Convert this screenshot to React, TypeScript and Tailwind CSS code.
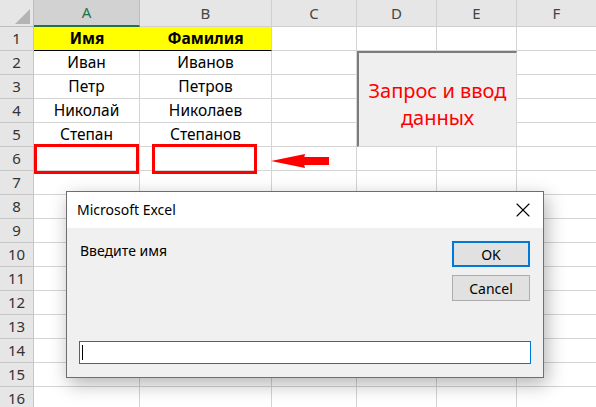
import { X } from 'lucide-react'

const cols = ['A', 'B', 'C', 'D', 'E', 'F']

const data: Record<number, [string, string]> = {
  2: ['Иван', 'Иванов'],
  3: ['Петр', 'Петров'],
  4: ['Николай', 'Николаев'],
  5: ['Степан', 'Степанов'],
}

const font = { fontFamily: '"Noto Sans", "Liberation Sans", sans-serif' }

function Sheet() {
  const rows = Array.from({ length: 16 }, (_, i) => i + 1)

  return (
    <div className="grid grid-cols-[34px_106px_132px_85px_80px_80px_80px] grid-rows-[27px_repeat(16,24px)] text-[15.5px] text-black">
      {/* corner */}
      <div className="relative bg-[#e6e6e6] border-r border-b border-[#bdbdbd]">
        <div className="absolute right-[3px] bottom-[2px] w-0 h-0 border-l-[15px] border-l-transparent border-b-[15px] border-b-[#b4b4b4]" />
      </div>
      {cols.map((c) =>
        c === 'A' ? (
          <div key={c} className="flex items-center justify-center bg-[#d2d2d2] border-r border-[#bdbdbd] border-b-2 border-b-[#217346] text-[#217346] text-[15px]">
            {c}
          </div>
        ) : (
          <div key={c} className="flex items-center justify-center bg-[#e6e6e6] border-r border-b border-[#d0d0d0] text-[#444] text-[15px]">
            {c}
          </div>
        )
      )}

      {rows.map((r) => (
        <Row key={r} r={r} />
      ))}

      {/* merged D2:E5 */}
      <div className="col-start-5 col-span-2 row-start-3 row-span-4 flex items-center justify-center pt-2 bg-[#efefef] border-t-2 border-l-2 border-[#7c7c7c] border-r border-r-[#d4d4d4] border-b border-b-[#d4d4d4] text-[20px] leading-[27px] text-[#ff0000] text-center">
        <span>
          Запрос и ввод
          <br />
          данных
        </span>
      </div>
    </div>
  )
}

function Row({ r }: { r: number }) {
  const header = (
    <div className="flex items-center justify-center bg-[#e6e6e6] border-r border-b border-[#c6c6c6] text-[#333] text-[15px]">
      {r}
    </div>
  )

  if (r === 1) {
    return (
      <>
        {header}
        <div className="flex items-center justify-center bg-[#ffff00] border-b border-black font-bold">Имя</div>
        <div className="flex items-center justify-center bg-[#ffff00] border-r border-r-[#d4d4d4] border-b border-black font-bold">Фамилия</div>
        {['C', 'D', 'E', 'F'].map((c) => (
          <div key={c} className="border-r border-b border-[#d4d4d4]" />
        ))}
      </>
    )
  }

  const vals = data[r]
  const skip = r >= 2 && r <= 5
  return (
    <>
      {header}
      <div className="flex items-center justify-center border-r border-b border-[#d4d4d4]">{vals?.[0]}</div>
      <div className="flex items-center justify-center border-r border-b border-[#d4d4d4]">{vals?.[1]}</div>
      <div className="border-r border-b border-[#d4d4d4]" />
      {!skip && <div className="border-r border-b border-[#d4d4d4]" />}
      {!skip && <div className="border-r border-b border-[#d4d4d4]" />}
      <div className="border-r border-b border-[#d4d4d4]" />
    </>
  )
}

function Dialog() {
  return (
    <div className="absolute left-[66px] top-[191px] w-[478px] h-[187px] flex flex-col bg-[#f0f0f0] border border-[#6e6e6e] shadow-[3px_6px_18px_rgba(0,0,0,0.3)] text-[14px] text-black">
      <div className="h-[36px] flex items-center justify-between bg-white pl-[10px] pr-[8px]">
        <span className="-mt-[1px]">Microsoft Excel</span>
        <X size={24} strokeWidth={1.1} className="text-black" />
      </div>
      <div className="flex-1 flex flex-col justify-between px-[12px] pt-[13px] pb-[13px]">
        <div className="flex justify-between">
          <span className="pl-[1px] -mt-[1px]">Введите имя</span>
          <div className="w-[78px] flex flex-col gap-[8px] mr-[1px]">
            <button className="h-[26px] bg-[#e1e1e1] border-2 border-[#0078d7] text-[14px]">OK</button>
            <button className="h-[26px] bg-[#e1e1e1] border border-[#adadad] text-[14px]">Cancel</button>
          </div>
        </div>
        <div className="h-[23px] bg-white border border-[#0078d7] flex items-center pl-[2px]">
          <div className="w-px h-[15px] bg-black" />
        </div>
      </div>
    </div>
  )
}

export default function App() {
  return (
    <div className="relative w-[596px] h-[407px] overflow-hidden bg-white" style={font}>
      <Sheet />

      {/* red marks drawn over the sheet */}
      <div className="absolute left-[34px] top-[144px] w-[105px] h-[30px] border-[3px] border-[#ff0000]" />
      <div className="absolute left-[152px] top-[144px] w-[105px] h-[30px] border-[3px] border-[#ff0000]" />
      <svg className="absolute left-[270px] top-[152px]" width="60" height="18" viewBox="0 0 60 18">
        <path d="M1 9 L35 2 Q33 9 35 16 Z" fill="#ff0000" />
        <rect x="33" y="5" width="26" height="8" fill="#ff0000" />
      </svg>

      <Dialog />
    </div>
  )
}
